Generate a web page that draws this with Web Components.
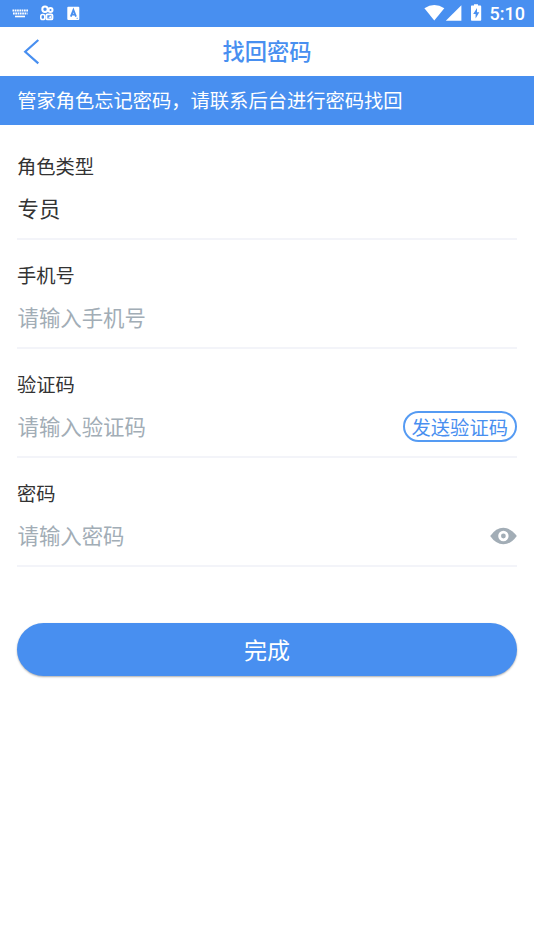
<!DOCTYPE html>
<html lang="zh-CN">
<head>
<meta charset="utf-8">
<title>找回密码</title>
<style>
html,body{margin:0;background:#fff}
body{font-family:"Noto Sans CJK SC",sans-serif;color:#333}
</style>
</head>
<body>
<reset-page></reset-page>
<script>
const define = (name, html) => {
  const t = document.createElement('template');
  t.innerHTML = html;
  customElements.define(name, class extends HTMLElement {
    constructor() {
      super();
      this.attachShadow({mode: 'open'}).appendChild(t.content.cloneNode(true));
    }
  });
};

define('status-bar', `
<style>
:host{display:flex;height:27px;box-sizing:border-box;background:#488ff0;color:#fff;align-items:stretch;justify-content:space-between}
svg{display:block}
.right{display:flex;padding-right:9px}
.time{font:500 18px/28px Roboto,sans-serif}
</style>
<svg width="100" height="27" viewBox="0 0 100 27" fill="none" stroke="#fff">
  <path d="M12.5 10.5H28M13 13.5H27.5" stroke-width="2" stroke-dasharray="1.7 .6"/>
  <path d="M15 16.5H25" stroke-width="1.6"/>
  <circle cx="45" cy="9.3" r="2.7" stroke-width="2"/>
  <circle cx="50.5" cy="10" r="2" stroke-width="2"/>
  <rect x="40.8" y="14.5" width="4" height="5" rx="1.8" stroke-width="1.6"/>
  <rect x="46.4" y="14.4" width="6" height="5" rx="1" stroke-width="1.9"/>
  <path d="M48.2 17.2L51 15.8V18.4Z" fill="#fff" stroke="none"/>
  <rect x="67.3" y="6.7" width="12" height="13.2" rx="1" fill="#fff" stroke="none"/>
  <path d="M70.8 16.6L73.4 10L76 16.6M71.7 14.6H75.1" stroke="#488ff0" stroke-width="1.8"/>
  <path d="M76.5 18.3H78" stroke="#488ff0" stroke-width=".7"/>
</svg>
<div class="right">
<svg width="66" height="27" viewBox="0 0 66 27" fill="#fff">
  <path d="M.4 8.3Q10.3 1.7 20.3 8.3L10.3 20.6Z"/>
  <path d="M37.4 5.2V20.8H21.8Z"/>
  <path d="M47 6.2Q47 5.6 47.6 5.6H50V4.2H54V5.6H56.4Q57.2 5.6 57.2 6.4V20Q57.2 20.8 56.4 20.8H47.8Q47 20.8 47 20Z"/>
  <path fill="#488ff0" d="M53 8L49.2 14H51.6V18.6L55.3 12.3H53Z"/>
</svg>
<span class="time">5:10</span>
</div>`);

define('nav-bar', `
<style>
:host{display:grid;grid-template-columns:64px 1fr 64px;height:49px;align-items:center;color:#488ff0}
h1{margin:0;text-align:center;font-size:22.25px;font-weight:500;line-height:47px;height:49px}
svg{display:block}
</style>
<svg width="64" height="49" viewBox="0 0 64 49" fill="none" stroke="#488ff0" stroke-width="2.2"><path d="M38.3 13L25.2 24.7L38.3 36.4"/></svg>
<h1><slot></slot></h1>`);

define('notice-bar', `
<style>
:host{display:block;height:48.6px;background:#488ff0;color:#fff;font-size:19.28px;line-height:48px;padding-left:17.2px;white-space:nowrap}
</style><slot></slot>`);

define('form-field', `
<style>
:host{display:flex;flex-direction:column;height:109.1px;box-sizing:border-box;border-bottom:2px solid #f3f4f9;padding-top:20px;--value:#a2adb6}
:host([filled]){--value:#333}
.label{font-size:19.28px;line-height:30px}
.row{display:flex;justify-content:space-between;align-items:center;height:56px;color:var(--value);font-size:21.4px;line-height:54px}
.row>span{height:56px;padding-left:.5px}
</style>
<div class="label"><slot name="label"></slot></div>
<div class="row"><span><slot></slot></span><slot name="action"></slot></div>`);

define('code-button', `
<style>
:host{display:block;box-sizing:border-box;width:114.5px;height:31.5px;margin-bottom:1px;border:2px solid #559bf3;border-radius:16px;color:#488ff0;font-size:19.28px;line-height:28px;text-align:center;white-space:nowrap}
</style><slot></slot>`);

define('eye-icon', `
<style>:host{display:block}svg{display:block}</style>
<svg width="27" height="18" viewBox="0 0 27 18"><path fill="#a2adb6" d="M.2 9Q6 .8 13.4 .8T26.8 9Q21 17.2 13.4 17.2T.2 9Z"/><circle cx="13.4" cy="9" r="3.8" fill="#a2adb6" stroke="#fff" stroke-width="2.8"/></svg>`);

define('primary-button', `
<style>
:host{display:block;height:53px;border-radius:27px;background:#488ff0;color:#fff;font-size:23px;line-height:53px;text-align:center;box-shadow:0 1px 2px rgba(0,0,0,.32)}
</style><slot></slot>`);

define('reset-page', `
<style>
:host{display:flex;flex-direction:column;height:950px;overflow:hidden}
main{padding:6px 17px 0}
primary-button{margin-top:56px}
</style>
<status-bar></status-bar>
<nav-bar>找回密码</nav-bar>
<notice-bar>管家角色忘记密码，请联系后台进行密码找回</notice-bar>
<main>
<form-field filled><span slot="label">角色类型</span>专员</form-field>
<form-field><span slot="label">手机号</span>请输入手机号</form-field>
<form-field><span slot="label">验证码</span>请输入验证码<code-button slot="action">发送验证码</code-button></form-field>
<form-field><span slot="label">密码</span>请输入密码<eye-icon slot="action"></eye-icon></form-field>
<primary-button>完成</primary-button>
</main>`);
</script>
</body>
</html>
